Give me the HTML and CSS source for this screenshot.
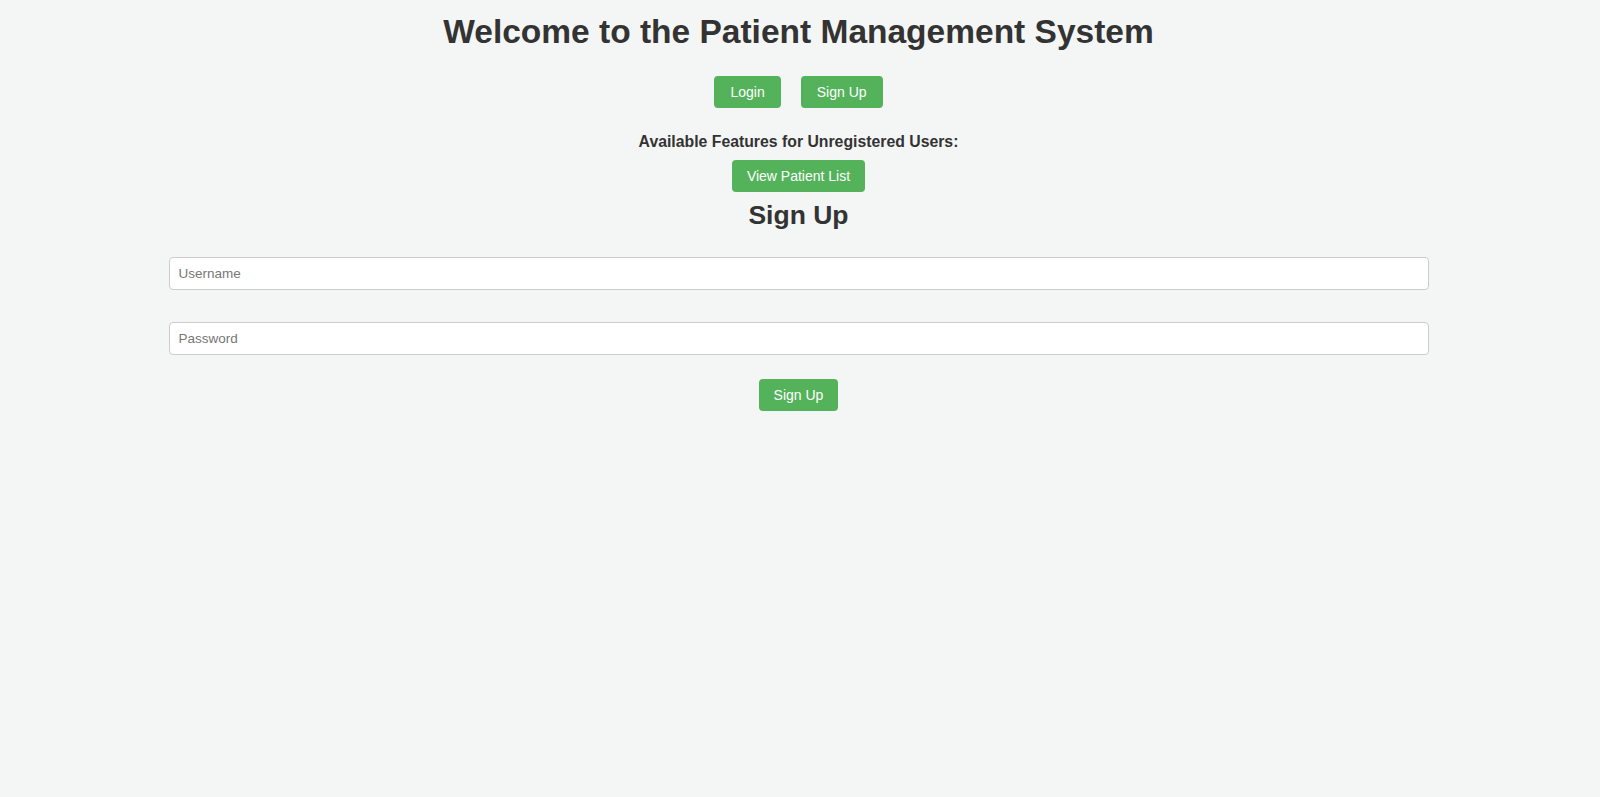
FILE: index.html
```html
<!DOCTYPE html>
<html lang="en">
<head>
<meta charset="utf-8">
<title>Patient Management System</title>
<link rel="stylesheet" href="styles.css">
</head>
<body>
<div class="page">
  <h1 class="title">Welcome to the Patient Management System</h1>
  <div class="auth-nav">
    <button class="btn">Login</button>
    <button class="btn">Sign Up</button>
  </div>
  <h4 class="features-heading">Available Features for Unregistered Users:</h4>
  <div class="features">
    <button class="btn">View Patient List</button>
  </div>
  <h2 class="form-title">Sign Up</h2>
  <form class="signup-form">
    <input class="field field-user" type="text" placeholder="Username">
    <input class="field field-pass" type="password" placeholder="Password">
    <button class="btn" type="button">Sign Up</button>
  </form>
</div>
</body>
</html>
```

FILE: styles.css
```css
html, body {
  margin: 0;
  background: #f4f6f5;
}
body {
  font-family: "Liberation Sans", Arial, sans-serif;
  color: #333;
}
.page {
  text-align: center;
  padding-right: 3px;
}
.title {
  font-size: 33.5px;
  line-height: normal;
  margin: 13px 0 0;
}
.auth-nav {
  display: flex;
  justify-content: center;
  gap: 20px;
  margin-top: 25px;
}
.btn {
  background: #54b25b;
  color: #fff;
  border: none;
  border-radius: 4px;
  padding: 8px 15px;
  font-family: "Liberation Sans", Arial, sans-serif;
  font-size: 14px;
  line-height: 16px;
  cursor: pointer;
}
.auth-nav .btn {
  padding: 8px 16px;
}
.features-heading {
  font-size: 15.8px;
  line-height: normal;
  margin: 25px 0 0;
}
.features {
  display: flex;
  justify-content: center;
  margin-top: 9px;
}
.form-title {
  font-size: 26.5px;
  line-height: normal;
  margin: 8px 0 0;
}
.signup-form {
  width: 1260px;
  margin: 26px auto 0;
  display: flex;
  flex-direction: column;
  align-items: center;
}
.field {
  width: 100%;
  box-sizing: border-box;
  height: 33px;
  padding: 8px 9px;
  border: 1px solid #ccc;
  border-radius: 4px;
  background: #fff;
  font-family: "Liberation Sans", Arial, sans-serif;
  font-size: 13.5px;
  color: #333;
}
.field::placeholder {
  color: #777;
}
.field-user {
  margin-bottom: 32px;
}
.field-pass {
  margin-bottom: 24px;
}
```
